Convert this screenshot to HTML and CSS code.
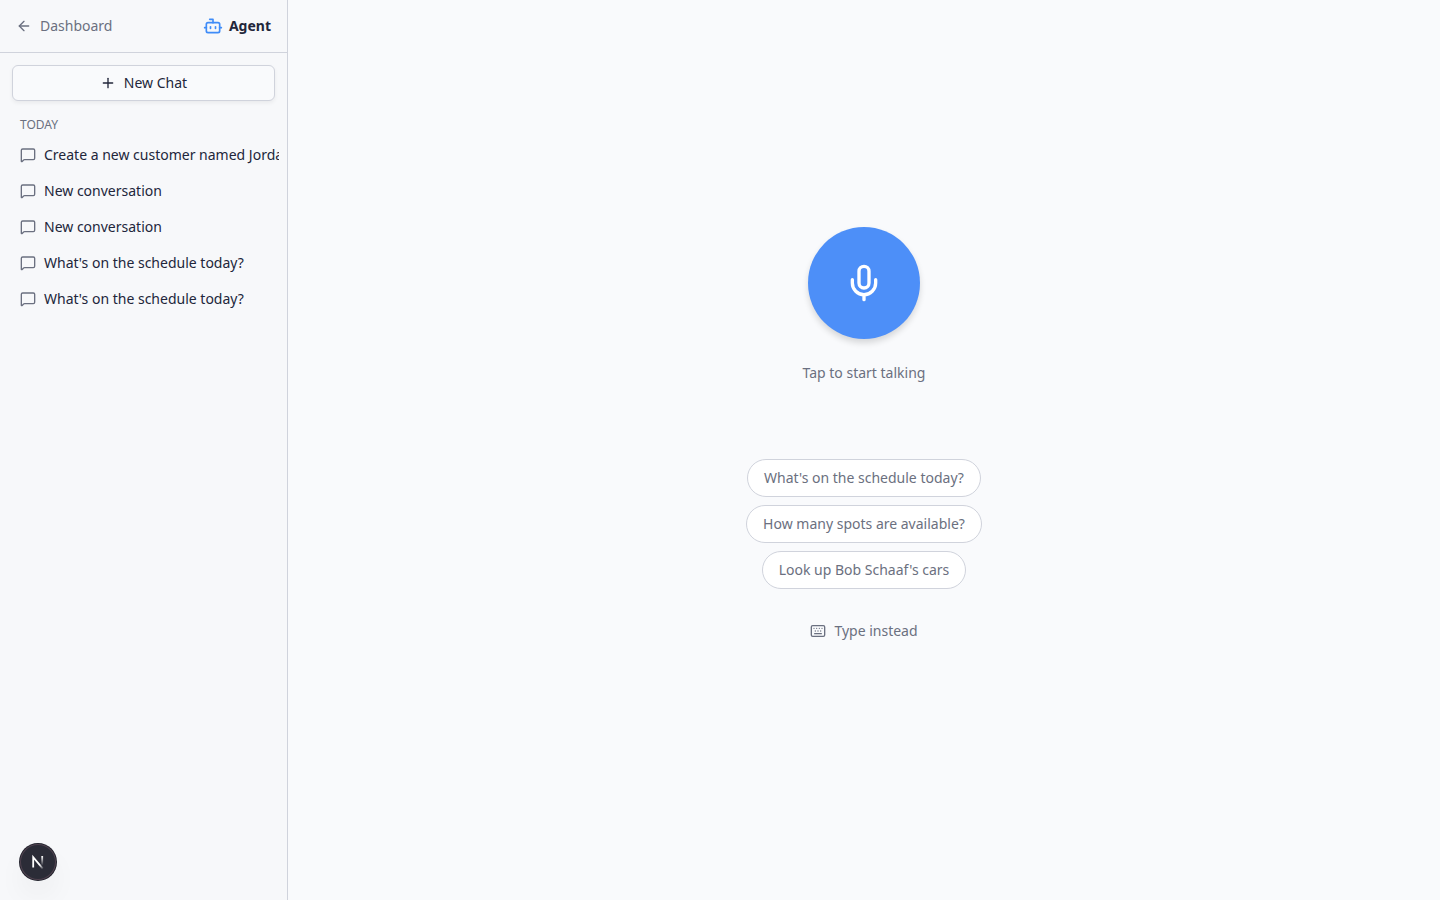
FILE: index.html
```html
<!DOCTYPE html>
<html lang="en">
<head>
    <meta charset="UTF-8">
    <meta name="viewport" content="width=device-width, initial-scale=1.0">
    <title>Agent</title>
    <link rel="stylesheet" href="styles.css">
</head>
<body>
    <!-- shared icon shapes -->
    <svg class="sprite" aria-hidden="true">
        <symbol id="icon-message" viewBox="0 0 24 24">
            <path d="M22 17a2 2 0 0 1-2 2H6.828a2 2 0 0 0-1.414.586l-2.202 2.202A.71.71 0 0 1 2 21.286V5a2 2 0 0 1 2-2h16a2 2 0 0 1 2 2z"/>
        </symbol>
    </svg>

    <aside class="sidebar">
        <header class="sidebar-header">
            <a class="back-link" href="#">
                <svg class="icon" viewBox="0 0 24 24"><path d="m12 19-7-7 7-7"/><path d="M19 12H5"/></svg>
                Dashboard
            </a>
            <div class="brand">
                <svg class="icon brand-icon" viewBox="0 0 24 24">
                    <path d="M12 8V4H8"/>
                    <rect width="16" height="12" x="4" y="8" rx="2"/>
                    <path d="M2 14h2"/><path d="M20 14h2"/>
                    <path d="M15 13v2"/><path d="M9 13v2"/>
                </svg>
                Agent
            </div>
        </header>

        <div class="new-chat">
            <button class="new-chat-button" type="button">
                <svg class="icon" viewBox="0 0 24 24"><path d="M5 12h14"/><path d="M12 5v14"/></svg>
                New Chat
            </button>
        </div>

        <nav class="history">
            <h2 class="history-title">Today</h2>
            <a class="history-item" href="#"><svg class="icon"><use href="#icon-message"/></svg>Create a new customer named Jordan</a>
            <a class="history-item" href="#"><svg class="icon"><use href="#icon-message"/></svg>New conversation</a>
            <a class="history-item" href="#"><svg class="icon"><use href="#icon-message"/></svg>New conversation</a>
            <a class="history-item" href="#"><svg class="icon"><use href="#icon-message"/></svg>What's on the schedule today?</a>
            <a class="history-item" href="#"><svg class="icon"><use href="#icon-message"/></svg>What's on the schedule today?</a>
        </nav>
    </aside>

    <main class="main">
        <button class="mic-button" type="button" aria-label="Start talking">
            <svg class="icon mic-icon" viewBox="0 0 24 24">
                <path d="M12 2a3 3 0 0 0-3 3v7a3 3 0 0 0 6 0V5a3 3 0 0 0-3-3Z"/>
                <path d="M19 10v2a7 7 0 0 1-14 0v-2"/>
                <path d="M12 19v3"/>
            </svg>
        </button>
        <p class="mic-hint">Tap to start talking</p>

        <div class="suggestions">
            <button class="suggestion" type="button">What's on the schedule today?</button>
            <button class="suggestion" type="button">How many spots are available?</button>
            <button class="suggestion" type="button">Look up Bob Schaaf's cars</button>
        </div>

        <button class="type-button" type="button">
            <svg class="icon" viewBox="0 0 24 24">
                <path d="M10 8h.01"/><path d="M12 12h.01"/><path d="M14 8h.01"/>
                <path d="M16 12h.01"/><path d="M18 8h.01"/><path d="M6 8h.01"/>
                <path d="M7 16h10"/><path d="M8 12h.01"/>
                <rect width="20" height="16" x="2" y="4" rx="2"/>
            </svg>
            Type instead
        </button>
    </main>

    <button class="dev-badge" type="button" aria-label="Open dev tools">
        <svg class="dev-logo" viewBox="0 0 40 40" fill="none">
            <defs>
                <linearGradient id="fadeDiagonal" x1="18" y1="20" x2="29" y2="32" gradientUnits="userSpaceOnUse">
                    <stop offset="0.4" stop-color="#fff"/>
                    <stop offset="1" stop-color="#fff" stop-opacity="0"/>
                </linearGradient>
                <linearGradient id="fadeStem" x1="27" y1="10" x2="27" y2="26" gradientUnits="userSpaceOnUse">
                    <stop offset="0" stop-color="#fff"/>
                    <stop offset="1" stop-color="#fff" stop-opacity="0"/>
                </linearGradient>
            </defs>
            <path d="M12 29V12L28 31" stroke="url(#fadeDiagonal)" stroke-width="3"/>
            <path d="M27 10V26" stroke="url(#fadeStem)" stroke-width="3"/>
        </svg>
    </button>
</body>
</html>
```

FILE: styles.css
```css
* {
    box-sizing: border-box;
}

body {
    margin: 0;
    min-height: 100vh;
    display: flex;
    background-color: #f9fafc;
    color: #22263a;
    font-family: "Noto Sans", sans-serif;
    font-size: 14px;
    line-height: 20px;
}

button {
    font: inherit;
    color: inherit;
    cursor: pointer;
}

a {
    color: inherit;
    text-decoration: none;
}

.sprite {
    position: absolute;
    width: 0;
    height: 0;
}

.icon {
    width: 16px;
    height: 16px;
    flex-shrink: 0;
    fill: none;
    stroke: currentColor;
    stroke-width: 2;
    stroke-linecap: round;
    stroke-linejoin: round;
}

/* Sidebar */
.sidebar {
    width: 288px;
    flex-shrink: 0;
    background-color: #f7f8fa;
    border-right: 1px solid #d0d3dc;
}

.sidebar-header {
    display: flex;
    align-items: center;
    justify-content: space-between;
    padding: 16px;
    border-bottom: 1px solid #d0d3dc;
}

.back-link {
    display: flex;
    align-items: center;
    gap: 8px;
    color: #6b7080;
}

.brand {
    display: flex;
    align-items: center;
    gap: 6px;
    font-weight: 700;
}

.brand-icon {
    width: 20px;
    height: 20px;
    color: #3f8cf8;
}

.new-chat {
    padding: 12px;
}

.new-chat-button {
    display: flex;
    align-items: center;
    justify-content: center;
    gap: 8px;
    width: 100%;
    padding: 7px 16px;
    background-color: #f9fafc;
    border: 1px solid #d0d3dc;
    border-radius: 6px;
    box-shadow: 0 2px 4px rgba(0, 0, 0, 0.06);
}

.history {
    padding: 0 8px;
}

.history-title {
    margin: 0;
    padding: 4px 12px;
    font-size: 12px;
    font-weight: 400;
    line-height: 16px;
    text-transform: uppercase;
    color: #6b7080;
}

.history-item {
    display: flex;
    align-items: center;
    gap: 8px;
    padding: 8px 0 8px 12px;
    overflow: hidden;
    white-space: nowrap;
}

.history-item .icon {
    color: #6b7080;
}

/* Voice panel */
.main {
    flex: 1;
    display: flex;
    flex-direction: column;
    align-items: center;
    justify-content: center;
    padding: 24px 24px 48px;
    color: #6b7080;
}

.mic-button {
    display: flex;
    align-items: center;
    justify-content: center;
    width: 112px;
    height: 112px;
    padding: 0;
    border: none;
    border-radius: 50%;
    background-color: #4d8ff8;
    color: #fff;
    box-shadow: 0 4px 6px rgba(0, 0, 0, 0.14);
}

.mic-icon {
    width: 40px;
    height: 40px;
}

.mic-hint {
    margin: 24px 0 76px;
}

.suggestions {
    display: flex;
    flex-direction: column;
    align-items: center;
    gap: 8px;
}

.suggestion {
    padding: 8px 16px;
    background-color: #fff;
    border: 1px solid #d0d3dc;
    border-radius: 20px;
}

.type-button {
    display: flex;
    align-items: center;
    gap: 8px;
    margin-top: 24px;
    padding: 8px 12px;
    border: none;
    background: none;
}

/* Floating dev tools badge */
.dev-badge {
    position: fixed;
    left: 20px;
    bottom: 20px;
    display: flex;
    align-items: center;
    justify-content: center;
    width: 36px;
    height: 36px;
    padding: 0;
    border: none;
    border-radius: 50%;
    background-color: #2b2c37;
    box-shadow: inset 0 0 0 1px #50424f, 0 0 0 1px #20212b, 0 16px 32px -8px rgba(0, 0, 0, 0.14);
}

.dev-logo {
    width: 24px;
    height: 24px;
}
```
